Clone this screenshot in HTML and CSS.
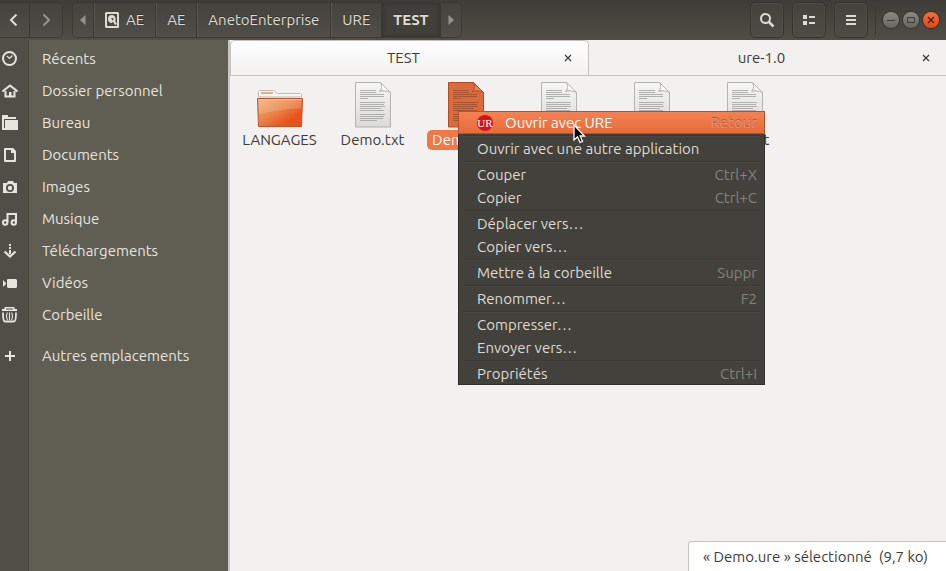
FILE: index.html
```html
<!DOCTYPE html>
<html lang="fr">
<head>
<meta charset="utf-8">
<title>TEST</title>
<link rel="stylesheet" href="styles.css">
</head>
<body>
<svg class="defs" aria-hidden="true">
  <defs>
    <linearGradient id="paper" x1="0" y1="0" x2="0" y2="1"><stop offset="0" stop-color="#f6f6f5"/><stop offset="1" stop-color="#dadad9"/></linearGradient>
    <linearGradient id="folder" x1="0" y1="0" x2="1" y2="1"><stop offset="0" stop-color="#efb277"/><stop offset=".45" stop-color="#ea8248"/><stop offset=".75" stop-color="#e9531c"/><stop offset="1" stop-color="#e5501b"/></linearGradient>
    <linearGradient id="curl" x1="0" y1="1" x2="1" y2="0"><stop offset="0" stop-color="#bbb"/><stop offset=".4" stop-color="#fff"/><stop offset="1" stop-color="#ccc"/></linearGradient>
    <symbol id="doc" viewBox="0 0 38 46">
      <path class="sheet" d="M1.500.5h25l10 10v34.500h-35z"/>
      <path class="fold" d="M26.500.5c2 4 1 6.500-1 9 3-1 7-1 11 1z"/>
      <path class="lines" d="M6 8.500h16M6 10.500h16M6 12.500h24M6 14.500h24M6 16.500h8M6 20.500h25M6 22.500h24M6 24.500h25M6 26.500h21M6 28.500h24M6 32.500h25M6 34.500h24M6 36.500h23M6 38.500h17"/>
    </symbol>
  </defs>
</svg>

<header class="toolbar">
  <nav class="history" aria-label="Historique">
    <button class="seg back" aria-label="Précédent"><svg width="16" height="16"><path d="M10.500 2.500 5 8l5.500 5.500" fill="none" stroke="currentColor" stroke-width="2"/></svg></button>
    <button class="seg forward dim" aria-label="Suivant"><svg width="16" height="16"><path d="m5.500 2.500 5.500 5.500-5.500 5.500" fill="none" stroke="currentColor" stroke-width="2"/></svg></button>
  </nav>
  <nav class="path" aria-label="Emplacement">
    <button class="seg arrow dim" aria-label="Défiler à gauche"><svg width="6" height="10"><path d="M5.500 0v10L0 5z" fill="currentColor"/></svg></button>
    <button class="seg crumb"><svg width="14" height="16"><path fill="currentColor" fill-rule="evenodd" d="M1 0h12l1 1v14l-1 1H1l-1-1V1zM2 2v12h10V2z"/><path d="M7 3a4 4 0 1 0 0 8l1-1.500 2 3.500 2-1-1.800-3A4 4 0 0 0 7 3z" fill="currentColor"/><path d="m6 6 3 .5L7.500 8.500z" fill="#46453f"/></svg>AE</button>
    <button class="seg crumb">AE</button>
    <button class="seg crumb">AnetoEnterprise</button>
    <button class="seg crumb">URE</button>
    <button class="seg crumb current">TEST</button>
    <button class="seg arrow dim" aria-label="Défiler à droite"><svg width="6" height="10"><path d="M.5 0v10L6 5z" fill="currentColor"/></svg></button>
  </nav>
  <div class="tools">
    <button class="tool" aria-label="Rechercher"><svg width="16" height="16"><circle cx="6.500" cy="6.500" r="4.500" fill="none" stroke="currentColor" stroke-width="2"/><path d="m9.500 9.500 5 5" stroke="currentColor" stroke-width="2.500"/></svg></button>
    <button class="tool" aria-label="Affichage"><svg width="14" height="12"><path fill="currentColor" d="M1 1h4v4H1zM1 7h4v4H1zM7 2h6v2H7zM7 8h6v2H7z"/></svg></button>
    <button class="tool" aria-label="Menu"><svg width="12" height="12"><path fill="currentColor" d="M1 1h10v2H1zM1 5h10v2H1zM1 9h10v2H1z"/></svg></button>
  </div>
  <div class="window-controls">
    <button class="orb" aria-label="Réduire"><svg width="10" height="10"><path d="M1 5.500h8" stroke="#3c3b37"/></svg></button>
    <button class="orb" aria-label="Agrandir"><svg width="10" height="10"><path d="M1.500 2.500h7v5h-7z" fill="none" stroke="#3c3b37"/></svg></button>
    <button class="orb close" aria-label="Fermer"><svg width="10" height="10"><path d="m2 2 6 6M8 2 2 8" stroke="#4a2010" stroke-width="1.300"/></svg></button>
  </div>
</header>

<div class="body">
  <aside class="sidebar">
    <a class="place" href="#"><span class="glyph"><svg width="16" height="16"><circle cx="7.500" cy="7.500" r="6.500" fill="none" stroke="currentColor" stroke-width="2"/><path d="M5 5 7.500 7.500l3-3" fill="none" stroke="currentColor" stroke-width="1.200"/></svg></span>Récents</a>
    <a class="place" href="#"><span class="glyph"><svg width="16" height="16"><path d="M.5 8.500 8 2.500l7.500 6M3.500 8v5.500h9V8" fill="none" stroke="currentColor" stroke-width="2"/><path d="M7 9h2.500v5H7z" fill="currentColor"/></svg></span>Dossier personnel</a>
    <a class="place" href="#"><span class="glyph"><svg width="16" height="16"><path d="M0 0h6v2h8v2H2v9H0z" fill="currentColor"/><path d="M3 5h13v10H3zM0 13h3v2H0z" fill="currentColor"/></svg></span>Bureau</a>
    <a class="place" href="#"><span class="glyph"><svg width="16" height="16"><path d="M3 2h7l3 3v9H3z" fill="none" stroke="currentColor" stroke-width="2" stroke-linejoin="round"/><path d="M9 1h2l3 3v2H9z" fill="currentColor"/></svg></span>Documents</a>
    <a class="place" href="#"><span class="glyph"><svg width="16" height="16"><path fill="currentColor" fill-rule="evenodd" d="M1 4h4l1-2h5l1 2h3v10H1zM8 5a4 4 0 1 0 0 8 4 4 0 0 0 0-8z"/><circle cx="8" cy="9" r="2.200" fill="currentColor"/></svg></span>Images</a>
    <a class="place" href="#"><span class="glyph"><svg width="16" height="16"><path d="M5.500 11V3H14v8" fill="none" stroke="currentColor" stroke-width="2"/><circle cx="3.200" cy="11.500" r="2.200" fill="none" stroke="currentColor" stroke-width="2"/><circle cx="11.800" cy="11.500" r="2.200" fill="none" stroke="currentColor" stroke-width="2"/></svg></span>Musique</a>
    <a class="place" href="#"><span class="glyph"><svg width="16" height="16"><path d="M7 1h2v2H7zM7 4h2v2H7zM7 7h2v4H7z" fill="currentColor"/><path d="m2.500 8.500 5.500 5 5.500-5" fill="none" stroke="currentColor" stroke-width="2.200"/></svg></span>Téléchargements</a>
    <a class="place" href="#"><span class="glyph"><svg width="16" height="16"><path d="M6 4h8l1 1v7l-1 1H6l-1-1V4.500zM1 5l3 3v1l-3 3z" fill="currentColor"/></svg></span>Vidéos</a>
    <a class="place" href="#"><span class="glyph"><svg width="16" height="16"><path d="M0 2h2l1-2h9l1 2h2v2H0zM4 1.500h7" fill="currentColor"/><path d="M4 2h7" stroke="#504f47"/><path d="M1 5.500c0 5 .5 9 2 9h9c1.500 0 2-4 2-9" fill="none" stroke="currentColor" stroke-width="1.800"/><path d="M5.500 5.500q-2 3.500 0 7.500M7.500 5.500V13M9.500 5.500q2 3.500 0 7.500" fill="none" stroke="currentColor" stroke-width="1.100"/></svg></span>Corbeille</a>
    <a class="place other" href="#"><span class="glyph"><svg width="16" height="16"><path d="M3 8h10M8 3v10" stroke="currentColor" stroke-width="2"/></svg></span>Autres emplacements</a>
  </aside>

  <main class="content">
    <div class="tabs">
      <div class="tab active"><button class="tab-name">TEST</button><button class="tab-close" aria-label="Fermer TEST"><svg width="8" height="8"><path d="m1 1 6 6M7 1 1 7" stroke="currentColor" stroke-width="1.200"/></svg></button></div>
      <div class="tab"><button class="tab-name">ure-1.0</button><button class="tab-close" aria-label="Fermer ure-1.0"><svg width="8" height="8"><path d="m1 1 6 6M7 1 1 7" stroke="currentColor" stroke-width="1.200"/></svg></button></div>
    </div>

    <div class="files">
      <div class="file">
        <svg class="thumb" width="48" height="46"><path d="M2.500 15V9.500l1-1h14l4 3h23l1 1V15z" fill="#f7f7f6" stroke="#b9b8b6"/><path d="M5 10h12v2H5z" fill="#f2a77c"/><path d="M1.500 16.500h45l-1 28h-43z" fill="url(#folder)" stroke="#b9562c"/><path d="M2.500 17.500h43l-.5 9Q24 27 3 32z" fill="#fff" opacity=".15"/><path d="M2.500 17.500h43" stroke="#f5c19a"/></svg>
        <span class="name">LANGAGES</span>
      </div>
      <div class="file"><svg class="thumb" width="38" height="46"><use href="#doc"/></svg><span class="name">Demo.txt</span></div>
      <div class="file selected"><svg class="thumb" width="38" height="46"><use href="#doc"/></svg><span class="name">Demo.ure</span></div>
      <div class="file"><svg class="thumb" width="38" height="46"><use href="#doc"/></svg></div>
      <div class="file"><svg class="thumb" width="38" height="46"><use href="#doc"/></svg></div>
      <div class="file"><svg class="thumb" width="38" height="46"><use href="#doc"/></svg><span class="name">test.txt</span></div>
    </div>

    <div class="menu" role="menu">
      <button class="item hover" role="menuitem"><svg class="app" width="16" height="16"><circle cx="8" cy="8" r="8" fill="#d3141c"/><text x="8" y="12" text-anchor="middle" class="app-text">UR</text></svg><span>Ouvrir avec URE</span><kbd>Retour</kbd></button>
      <hr>
      <button class="item" role="menuitem"><span>Ouvrir avec une autre application</span></button>
      <hr>
      <button class="item" role="menuitem"><span>Couper</span><kbd>Ctrl+X</kbd></button>
      <button class="item" role="menuitem"><span>Copier</span><kbd>Ctrl+C</kbd></button>
      <hr>
      <button class="item" role="menuitem"><span>Déplacer vers…</span></button>
      <button class="item" role="menuitem"><span>Copier vers…</span></button>
      <hr>
      <button class="item" role="menuitem"><span>Mettre à la corbeille</span><kbd>Suppr</kbd></button>
      <hr>
      <button class="item" role="menuitem"><span>Renommer…</span><kbd>F2</kbd></button>
      <hr>
      <button class="item" role="menuitem"><span>Compresser…</span></button>
      <button class="item" role="menuitem"><span>Envoyer vers…</span></button>
      <hr>
      <button class="item" role="menuitem"><span>Propriétés</span><kbd>Ctrl+I</kbd></button>
      <svg class="pointer" width="13" height="20"><path d="M1 1v15l3.500-3.200L7 18.500l2.500-1-2.400-5.500H11.500z" fill="#000" stroke="#fff" stroke-width="1.300"/></svg>
    </div>

    <div class="status" role="status">« Demo.ure » sélectionné&nbsp; (9,7 ko)</div>
  </main>
</div>
</body>
</html>
```
FILE: styles.css
```css
* { box-sizing: border-box; }

body {
  margin: 0;
  min-height: 100vh;
  display: flex;
  flex-direction: column;
  font: 15px/20px Ubuntu, "Noto Sans", sans-serif;
  color: #3c3b37;
  background: #f2f1f0;
}

button {
  margin: 0;
  padding: 0;
  border: 0;
  background: none;
  font: inherit;
  color: inherit;
}

svg { display: block; flex: none; }
.defs { position: absolute; width: 0; height: 0; }

/* Toolbar */
.toolbar {
  display: flex;
  align-items: center;
  height: 40px;
  padding-right: 7px;
  background: linear-gradient(#3d3c38, #504e46);
  color: #dfdbd2;
}

.history, .path {
  display: flex;
  height: 36px;
  border: 1px solid #3a3934;
  border-radius: 5px;
  background: linear-gradient(#43423d, #504e47);
}

.history { border-left: 0; border-radius: 0 5px 5px 0; margin-right: 9px; }

.seg {
  display: flex;
  align-items: center;
  justify-content: center;
  gap: 7px;
  padding: 0 11px;
  text-shadow: 0 -1px #33322e;
}

.seg + .seg { border-left: 1px solid #383732; box-shadow: inset 1px 0 #58564e; }
.back { padding: 0 7px 0 6px; }
.forward { padding: 0 8px; }
.arrow { padding: 0 7px; }
.dim { color: #96938b; }
.current { font-weight: bold; background: #403f3a; }
.seg + .current { box-shadow: inset 0 0 4px #2f2e2a; }
.history .seg + .seg, .current + .seg.arrow { box-shadow: none; }

.tools { display: flex; gap: 8px; margin-left: auto; padding-right: 7px; }

.tool {
  display: grid;
  place-items: center;
  width: 34px;
  height: 36px;
  border: 1px solid #35342f;
  border-radius: 5px;
  box-shadow: inset 0 0 0 1px #504e47;
  background: linear-gradient(#43423d, #4e4c45);
}

.window-controls {
  display: flex;
  align-items: center;
  gap: 4px;
  height: 28px;
  padding-left: 7px;
  border-left: 1px solid #393833;
}

.orb {
  display: grid;
  place-items: center;
  width: 16px;
  height: 16px;
  border-radius: 50%;
  background: linear-gradient(#8b8980, #68665f);
  box-shadow: 0 0 0 1px #35342f;
}

.orb.close { background: linear-gradient(#f4703f, #df4a16); }

/* Sidebar */
.body { flex: 1; display: flex; }

.sidebar {
  flex: none;
  width: 230px;
  padding-top: 3px;
  border-right: 2px solid #c9c6c3;
  background: linear-gradient(90deg, #504f47 28px, #47463f 28px, #47463f 29px, #605d52 29px);
}

.place {
  display: flex;
  align-items: center;
  height: 32px;
  color: #e6e4df;
  text-decoration: none;
}

.glyph { width: 42px; padding-left: 2px; }
.other { margin-top: 9px; }

/* Content */
.content { position: relative; flex: 1; min-width: 0; }

.tabs { display: flex; height: 36px; border-bottom: 1px solid #c5c2bf; }

.tab {
  flex: 1;
  display: flex;
  align-items: center;
  padding-right: 15px;
}

.tab.active {
  border: 1px solid #c5c2bf;
  border-bottom: 0;
  border-radius: 5px 5px 0 0;
  background: linear-gradient(#fff, #f2f1f0);
}

.tab-name { flex: 1; padding-left: 13px; }
.tab-close { padding: 4px 1px; }

.files {
  display: grid;
  grid-template-columns: repeat(auto-fill, 93px);
  padding: 6px 3px;
}

.file {
  display: flex;
  flex-direction: column;
  align-items: center;
  gap: 2px;
}

.name { padding: 0 5px; border-radius: 5px; }
.selected .name { background: #f07746; color: #fff; }

.sheet { fill: var(--sheet, url(#paper)); stroke: var(--edge, #b3b3b2); }
.fold { fill: var(--fold, url(#curl)); stroke: var(--edge, #b3b3b2); }
.lines { fill: none; stroke: var(--ink, #b0b0af); }
.selected { --sheet: #dd6a3b; --edge: #ad4c25; --fold: #e88259; --ink: #a75433; }

/* Context menu */
.menu {
  position: absolute;
  top: 71px;
  left: 228px;
  width: 307px;
  background: #42413b;
  box-shadow: inset 0 0 0 1px #2f2e2a;
  color: #dfdbd2;
}

.menu hr {
  height: 3px;
  margin: 0 5px;
  border: 0;
  background: linear-gradient(#42413b 1px, #3a3934 1px, #3a3934 2px, #484741 2px);
}

.item {
  display: flex;
  align-items: center;
  width: 100%;
  height: 23px;
  padding: 0 8px 0 19px;
  text-align: left;
}

.item kbd { margin-left: auto; font: inherit; color: #85837b; }
.app { margin-right: 12px; }
.app-text { font: 11px "Liberation Serif", serif; fill: #fff; }

.hover {
  background: linear-gradient(#f58254, #e66a38);
  box-shadow: inset 0 0 0 1px #b3522b;
  color: #fff;
}

.item.hover kbd { color: #d69478; text-shadow: 0 -1px #bd5830; }
.pointer { position: absolute; top: 13px; left: 115px; }

.status {
  position: absolute;
  right: 0;
  bottom: 0;
  padding: 5px 18px 4px 14px;
  border: 1px solid #c5c2bf;
  border-width: 1px 0 0 1px;
  border-radius: 4px 0 0 0;
  background: #fff;
}
```
